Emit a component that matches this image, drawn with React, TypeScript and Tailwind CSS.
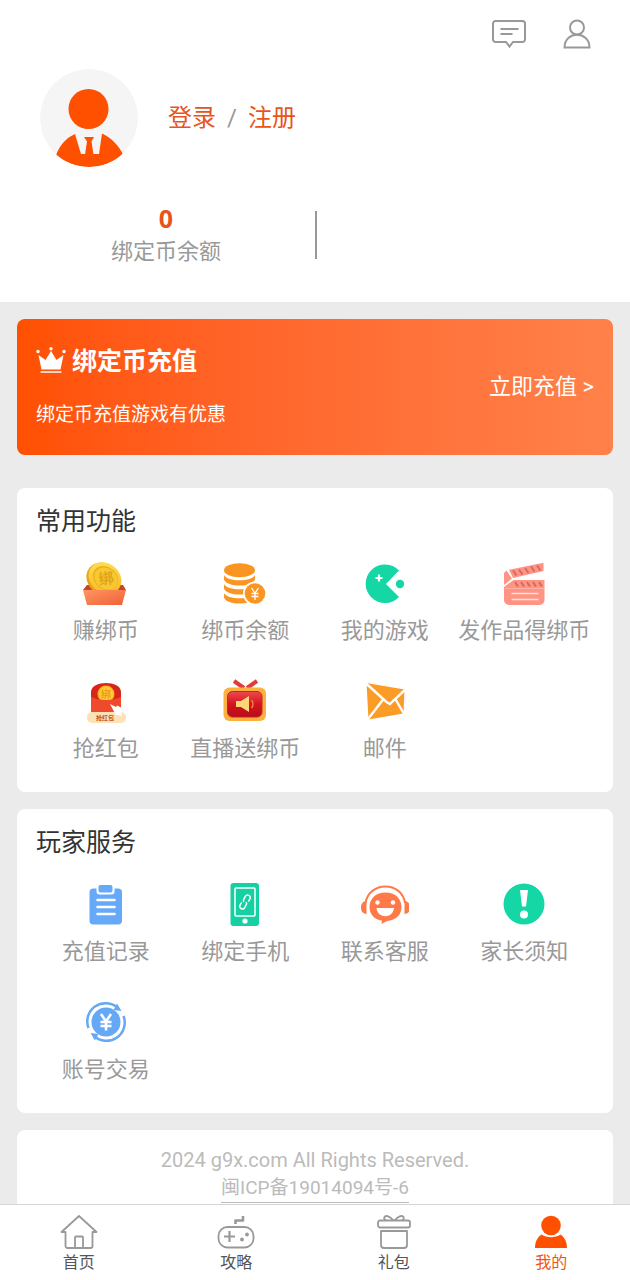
import React from 'react';

type MenuItem = {
  label: string;
  icon: React.ReactNode;
};

type MenuCardProps = {
  title: string;
  items: MenuItem[];
};

const Icon: React.FC<{ children: React.ReactNode }> = ({ children }) => (
  <svg viewBox="0 0 48 48" className="w-12 h-12" fill="none" aria-hidden="true">
    {children}
  </svg>
);

const EarnIcon = () => (
  <Icon>
    <defs>
      <linearGradient id="earnCoin" x1="0" y1="0" x2="1" y2="1">
        <stop offset="0" stopColor="#ffe45c" />
        <stop offset="1" stopColor="#f9b21c" />
      </linearGradient>
      <linearGradient id="earnBox" x1="0" y1="0" x2="1" y2="1">
        <stop offset="0" stopColor="#ff9560" />
        <stop offset="1" stopColor="#ee6238" />
      </linearGradient>
    </defs>
    <path d="M5 25h36l3 5H1z" fill="#c9432a" />
    <ellipse cx="21.500" cy="19" rx="18" ry="15.500" transform="rotate(38 21.5 19)" fill="#e9a411" />
    <ellipse cx="23" cy="18" rx="17.500" ry="14.500" transform="rotate(38 23 18)" fill="url(#earnCoin)" />
    <ellipse cx="23.500" cy="18" rx="13.500" ry="11" transform="rotate(38 23.5 18)" fill="#eeb01c" />
    <ellipse cx="24" cy="18.500" rx="12.500" ry="10" transform="rotate(38 24 18.5)" fill="#f7c930" />
    <text x="24" y="24" textAnchor="middle" fontSize="15" fontWeight="700" fill="#e3a31c" transform="rotate(-8 24 18)">绑</text>
    <path d="M1 30h43l-4 15H5z" fill="url(#earnBox)" />
  </Icon>
);

const CoinsIcon = () => (
  <Icon>
    <ellipse cx="18.500" cy="10.200" rx="15.500" ry="7" fill="#fb9522" />
    <path d="M3 15c3 7 28 7 31 0v4.500c-3 8-28 8-31 0z" fill="#fb9522" />
    <path d="M3 24c3 7 28 7 31 0v4.500c-3 8-28 8-31 0z" fill="#fb9522" />
    <path d="M3 33c3 7 28 7 31 0v4.500c-3 8-28 8-31 0z" fill="#fb9522" />
    <circle cx="34" cy="33.500" r="12" fill="#fff" />
    <circle cx="34" cy="33.500" r="10.300" fill="#fb9522" />
    <path d="M30.500 28l3.500 5 3.500-5M34 33v7M30.500 33.500h7M30.500 36.500h7" stroke="#fff" strokeWidth="1.300" />
  </Icon>
);

const GameIcon = () => (
  <Icon>
    <path d="M38 10.500A19.300 19.300 0 1 0 38 37L25 24z" fill="#15d6a5" />
    <circle cx="39" cy="24" r="4.200" fill="#15d6a5" />
    <path d="M18 14.500v7M14.500 18h7" stroke="#fff" strokeWidth="2.200" />
  </Icon>
);

const ClapperIcon = () => (
  <Icon>
    <path d="M9 9.700L43.500 2.700v8.300L13 18z" fill="#ff9484" />
    <path d="M4 13l2.500-2.500 5.500 8L4 25z" fill="#ff9484" />
    <path d="M13.500 20h31v20a5 5 0 0 1-5 5H9a5 5 0 0 1-5-5V27z" fill="#ff9484" />
    <path d="M5 28.500h39" stroke="#fbb0a3" strokeWidth="1" />
    <path d="M13 10.500l3.500 5M19 9.500l3.500 5M25 8l3.500 5M31 6.500l3.500 5M37 5.500l3.500 5M15 22l3 4.500M21 22l3 4.500M27 22l3 4.500M33 22l3 4.500M39 22l3 4.500" stroke="#d4695d" strokeWidth="2" />
    <path d="M11.500 33.500h27M11.500 39.500h27" stroke="#ffe2dc" strokeWidth="1.500" />
  </Icon>
);

const RedPacketIcon = () => (
  <Icon>
    <path d="M9 14c0-12 30-12 30 0v20H9z" fill="#d8261a" />
    <circle cx="24" cy="16" r="8.500" fill="#fbb822" />
    <circle cx="24" cy="16" r="7" fill="#ffce39" />
    <text x="24" y="20" textAnchor="middle" fontSize="10" fontWeight="700" fill="#f29a12">绑</text>
    <path d="M9 19c9 4 21 4 30 0v16H9z" fill="#f04a2c" />
    <rect x="5" y="34" width="39" height="11" rx="5" fill="#fde2b8" />
    <text x="23" y="42" textAnchor="middle" fontSize="6" fontWeight="700" fill="#b5532f">抢红包</text>
    <path d="M28 26l6 3 1-1.500 6 3-1.500 7.500-6-1.500z" fill="#fff" />
  </Icon>
);

const LiveIcon = () => (
  <Icon>
    <defs>
      <linearGradient id="liveScreen" x1="0" y1="0" x2="0" y2="1">
        <stop offset="0" stopColor="#ed4a50" />
        <stop offset="0.5" stopColor="#d4141f" />
        <stop offset="1" stopColor="#b50d18" />
      </linearGradient>
    </defs>
    <path d="M13 3l10 7M36 3l-10 7" stroke="#e03d35" strokeWidth="4" />
    <rect x="2.500" y="9.500" width="42.500" height="33.500" rx="6" fill="#fbb03f" />
    <rect x="6.500" y="13.500" width="34.500" height="25.500" rx="5" fill="url(#liveScreen)" stroke="#c62424" />
    <path d="M15 23h5l8-5v16l-8-5h-5z" fill="#ffd676" />
    <path d="M30.500 22c2 2 2 6 0 8" stroke="#f57f3b" strokeWidth="1.500" />
  </Icon>
);

const MailIcon = () => (
  <Icon>
    <path d="M5.500 5L43.500 11.500l-1 24-35 6z" fill="#fd9b27" />
    <path d="M4 4.500L25.500 24l3.500 2 3.500-3.500L45 11M5.500 43L22.500 21M44 37.500L34 20.500" stroke="#fff" strokeWidth="2.400" />
  </Icon>
);

const RecordIcon = () => (
  <Icon>
    <rect x="7.500" y="7.500" width="32.500" height="36" rx="4" fill="#65a9f8" />
    <rect x="14.500" y="1" width="18" height="12.500" rx="3" fill="#fff" />
    <rect x="16.500" y="4" width="14" height="7.500" rx="2" fill="#65a9f8" />
    <path d="M15.500 19h17M15.500 26h17M15.500 33h17" stroke="#fff" strokeWidth="2.500" strokeLinecap="round" />
  </Icon>
);

const PhoneIcon = () => (
  <Icon>
    <rect x="9.500" y="2" width="28.500" height="43" rx="3" fill="#15d0a2" />
    <rect x="14" y="7" width="20" height="28" rx="1" stroke="#fff" strokeWidth="1.500" />
    <circle cx="24" cy="40" r="2.600" fill="#fff" />
    <g transform="rotate(30 24 21)" stroke="#fff" strokeWidth="1.500">
      <path d="M23 21.500a2.600 2.600 0 0 1-1.500-2.500v-3a2.600 2.600 0 0 1 5.200 0v3" />
      <path d="M25 20.500a2.600 2.600 0 0 1 1.500 2.500v3a2.600 2.600 0 0 1-5.200 0v-3" />
    </g>
  </Icon>
);

const ServiceIcon = () => (
  <Icon>
    <path d="M4.500 22C8 0 41 0 44 22" stroke="#ff7a48" strokeWidth="2" />
    <path d="M5.500 20v13C1.500 32.500 0 30 0 26.500S1.500 20.500 5.500 20zM43.500 20v13c4-.5 5.500-3 5.500-6.500s-1.500-6-5.500-6.500z" fill="#ff7a48" />
    <path d="M24.500 11.500c9.500 0 16 6 16 14.500S34 39.500 26 40l-5.500 3 .5-3.500C13 38.500 8.500 33 8.500 26c0-8.500 6.500-14.500 16-14.500z" fill="#ff7a48" />
    <circle cx="16.500" cy="21.500" r="2.200" fill="#fff" />
    <circle cx="32" cy="21.500" r="2.200" fill="#fff" />
    <path d="M15.500 27h17.500c-1 11-16.500 11-17.500 0z" fill="#fff" />
  </Icon>
);

const NoticeIcon = () => (
  <Icon>
    <circle cx="24" cy="23" r="20.500" fill="#15d6a5" />
    <path d="M20 9h8l-2 16.500h-4z" fill="#fff" />
    <circle cx="24" cy="33.500" r="4" fill="#fff" />
  </Icon>
);

const TradeIcon = () => (
  <Icon>
    <circle cx="24" cy="23" r="14.500" fill="#64a8f6" />
    <path d="M6.500 29A18.300 18.300 0 0 1 36 9M41.500 17A18.300 18.300 0 0 1 12 37" stroke="#64a8f6" strokeWidth="2.500" />
    <path d="M35 4.500l4.500 7.500-8-1zM13 41.500L8.500 34l8 1z" fill="#64a8f6" />
    <path d="M19 15l5 7.500 5-7.500M24 22v9.500M18.500 23h11M18.500 27h11" stroke="#fff" strokeWidth="2.600" />
  </Icon>
);

const commonItems: MenuItem[] = [
  { label: '赚绑币', icon: <EarnIcon /> },
  { label: '绑币余额', icon: <CoinsIcon /> },
  { label: '我的游戏', icon: <GameIcon /> },
  { label: '发作品得绑币', icon: <ClapperIcon /> },
  { label: '抢红包', icon: <RedPacketIcon /> },
  { label: '直播送绑币', icon: <LiveIcon /> },
  { label: '邮件', icon: <MailIcon /> },
];

const serviceItems: MenuItem[] = [
  { label: '充值记录', icon: <RecordIcon /> },
  { label: '绑定手机', icon: <PhoneIcon /> },
  { label: '联系客服', icon: <ServiceIcon /> },
  { label: '家长须知', icon: <NoticeIcon /> },
  { label: '账号交易', icon: <TradeIcon /> },
];

const MenuCard: React.FC<MenuCardProps> = ({ title, items }) => (
  <section className="bg-white rounded-lg px-[19px] pt-4 pb-7">
    <h2 className="text-[25px] leading-9 text-[#333]">{title}</h2>
    <div className="grid grid-cols-4 gap-y-8 mt-5">
      {items.map((item) => (
        <a key={item.label} href="#" className="flex flex-col items-center gap-2">
          {item.icon}
          <span className="text-[22px] leading-[30px] text-[#999] whitespace-nowrap">{item.label}</span>
        </a>
      ))}
    </div>
  </section>
);

const tabs = [
  {
    label: '首页',
    active: false,
    icon: (
      <>
        <path d="M5.500 18H1.500L19 2l17.500 16h-4v14a2 2 0 0 1-2 2h-23a2 2 0 0 1-2-2z" />
        <path d="M15 34V23.500a1 1 0 0 1 1-1h6a1 1 0 0 1 1 1V34" />
      </>
    ),
  },
  {
    label: '攻略',
    active: false,
    icon: (
      <>
        <rect x="1.500" y="13" width="35" height="20.500" rx="9" />
        <path d="M18.500 10V6.500h7.500V2" strokeWidth="2.600" />
        <path d="M7 22.500h11M12.500 17v11" strokeWidth="2.200" />
        <circle cx="25" cy="25.500" r="1" fill="currentColor" />
        <circle cx="30" cy="20.500" r="1" fill="currentColor" />
      </>
    ),
  },
  {
    label: '礼包',
    active: false,
    icon: (
      <>
        <rect x="3" y="6.500" width="32" height="7" rx="2" />
        <path d="M6 17h26v14a3 3 0 0 1-3 3H9a3 3 0 0 1-3-3z" />
        <path d="M18.500 6.500C15 2 11 1 9.500 3c-1 1.500 0 2.500 1.500 3.500M19.500 6.500C23 2 27 1 28.500 3c1 1.500 0 2.500-1.500 3.500" />
      </>
    ),
  },
  {
    label: '我的',
    active: true,
    icon: (
      <g fill="currentColor" stroke="none">
        <circle cx="19" cy="11.500" r="9.800" />
        <path d="M9.500 20.500c5.500 3.500 13.500 3.500 19 0C33 23.500 35 28.500 35 34H3c0-5.500 2-10.500 6.500-13.500z" />
      </g>
    ),
  },
];

const App: React.FC = () => {
  return (
    <div className="h-screen flex flex-col bg-[#ebebeb] font-['Roboto','Noto_Sans_CJK_SC',sans-serif]">
      <main className="flex-1 min-h-0 overflow-y-auto [scrollbar-width:none]">
        <header className="bg-white pt-4 pb-[34px]">
          <div className="flex justify-end gap-[31px] px-9 text-[#999]">
            <button aria-label="消息">
              <svg viewBox="0 0 36 36" className="w-9 h-9" fill="none" stroke="currentColor" strokeWidth="2">
                <path d="M4.500 5h27a2.500 2.500 0 0 1 2.500 2.500v16a2.500 2.500 0 0 1-2.500 2.500H22l-3.500 4.500L15 26H4.500A2.500 2.500 0 0 1 2 23.500v-16A2.500 2.500 0 0 1 4.500 5z" />
                <path d="M9.500 13h18M9.500 18h12" />
              </svg>
            </button>
            <button aria-label="个人中心">
              <svg viewBox="0 0 36 36" className="w-9 h-9" fill="none" stroke="currentColor" strokeWidth="2">
                <circle cx="19" cy="11.500" r="7" />
                <path d="M6.500 31.500c0-17 25-17 25 0z" />
              </svg>
            </button>
          </div>

          <div className="flex items-center gap-[30px] px-10 mt-[17px]">
            <svg viewBox="0 0 98 98" className="w-[98px] h-[98px] rounded-full" aria-hidden="true">
              <circle cx="49" cy="49" r="49" fill="#f5f5f5" />
              <circle cx="48.500" cy="40" r="20" fill="#ff5000" />
              <path d="M16 86c4-10 10-17 19-21l6 20h18l3-20.500c9 4 17 12 21 21-18 16.500-49 16.500-67 .5z" fill="#ff5000" />
              <path d="M44 68h10l-2.500 4.500 2 13h-8.500l2-13z" fill="#ff5000" />
            </svg>
            <div className="flex items-center gap-[11px] text-2xl text-[#e8541a]">
              <a href="#">登录</a>
              <span className="text-[#999]">/</span>
              <a href="#">注册</a>
            </div>
          </div>

          <div className="grid grid-cols-2 items-center mx-[17px] mt-[35px]">
            <div className="flex flex-col items-center">
              <strong className="font-['Open_Sans',sans-serif] text-[25px] leading-8 font-bold text-[#e8541a]">0</strong>
              <span className="text-[22px] leading-8 text-[#999] mt-[2px]">绑定币余额</span>
            </div>
            <div className="h-12 border-l-2 border-[#999]" />
          </div>
        </header>

        <div className="px-[17px] pt-[17px]">
          <section className="flex items-center justify-between rounded-lg px-[19px] pt-[25px] pb-[26px] text-white bg-linear-to-r from-[#ff5000] to-[#ff814a]">
            <div>
              <h2 className="flex items-center gap-[6px] text-[25px] leading-9 font-bold">
                <svg viewBox="0 0 30 30" className="w-[30px] h-[30px]" fill="currentColor" aria-hidden="true">
                  <path d="M2.500 8l7 5L15 4l5.500 9 7-5L24.500 22.500h-19z" />
                  <path d="M4.500 24h21v2h-21z" opacity=".75" />
                  <circle cx="2" cy="4.500" r="1.700" />
                  <circle cx="15" cy="1.700" r="1.700" />
                  <circle cx="28" cy="4.500" r="1.700" />
                </svg>
                绑定币充值
              </h2>
              <p className="text-[19px] leading-7 mt-[21px]">绑定币充值游戏有优惠</p>
            </div>
            <a href="#" className="text-[22px] leading-8">立即充值 &gt;</a>
          </section>

          <div className="flex flex-col gap-[17px] mt-[33px]">
            <MenuCard title="常用功能" items={commonItems} />
            <MenuCard title="玩家服务" items={serviceItems} />
            <footer className="bg-white rounded-t-lg pt-4 pb-8 text-center leading-7 text-[#bbb]">
              <p className="text-xl leading-7">2024 g9x.com All Rights Reserved.</p>
              <a href="#" className="inline-block border-b border-[#bbb] text-[19px] leading-7">闽ICP备19014094号-6</a>
            </footer>
          </div>
        </div>
      </main>

      <nav className="grid grid-cols-4 bg-white border-t border-[#d5d5d5] pt-[9px] pb-1.5">
        {tabs.map((tab) => (
          <a
            key={tab.label}
            href="#"
            className={tab.active ? 'flex flex-col items-center gap-0.5 text-[#f0561a]' : 'flex flex-col items-center gap-0.5 text-[#555]'}
          >
            <svg
              viewBox="0 0 38 36"
              className={tab.active ? 'w-[38px] h-9 text-[#ff5000]' : 'w-[38px] h-9 text-[#999]'}
              fill="none"
              stroke="currentColor"
              strokeWidth="1.800"
              strokeLinejoin="round"
              aria-hidden="true"
            >
              {tab.icon}
            </svg>
            <span className="text-base leading-[22px]">{tab.label}</span>
          </a>
        ))}
      </nav>
    </div>
  );
};

export default App;
